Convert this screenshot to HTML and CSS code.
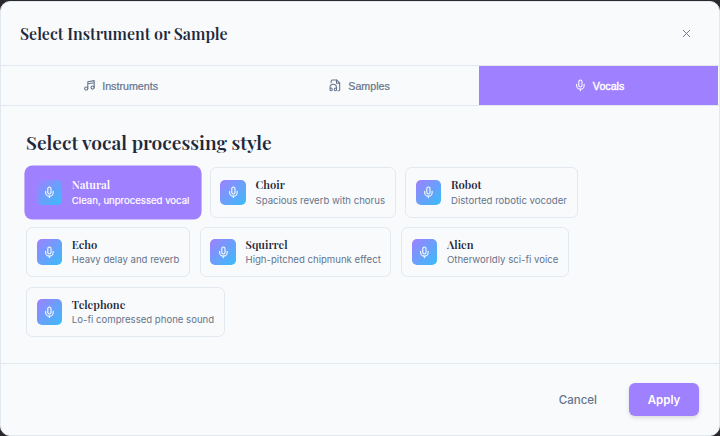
FILE: index.html
```html
<!DOCTYPE html>
<html lang="en">
<head>
<meta charset="utf-8">
<title>Select Instrument or Sample</title>
<link rel="stylesheet" href="styles.css">
</head>
<body>
<svg class="defs" aria-hidden="true">
  <symbol id="mic" viewBox="0 0 24 24"><path d="M12 2a3 3 0 0 0-3 3v7a3 3 0 0 0 6 0V5a3 3 0 0 0-3-3Z"/><path d="M19 10v2a7 7 0 0 1-14 0v-2M12 19v3"/></symbol>
  <symbol id="music" viewBox="0 0 24 24"><path d="M9 18V5l12-2v13M9 9l12-2"/><circle cx="6" cy="18" r="3"/><circle cx="18" cy="16" r="3"/></symbol>
  <symbol id="file-audio" viewBox="0 0 24 24"><path d="M4 7V4a2 2 0 0 1 2-2h8.500L20 7.500V20a2 2 0 0 1-2 2h-1"/><path d="M14 2v6h6"/><path d="M2 19a2 2 0 1 1 4 0v1a2 2 0 1 1-4 0v-4a6 6 0 0 1 12 0v4a2 2 0 1 1-4 0v-1a2 2 0 1 1 4 0"/></symbol>
  <symbol id="close" viewBox="0 0 24 24"><path d="M18 6 6 18M6 6l12 12"/></symbol>
</svg>
<div class="dialog" role="dialog">
  <header class="header">
    <h1 class="title">Select Instrument or Sample</h1>
    <button class="close" aria-label="Close"><svg class="icon"><use href="#close"/></svg></button>
  </header>
  <nav class="tabs">
    <button class="tab"><svg class="icon"><use href="#music"/></svg><span>Instruments</span></button>
    <button class="tab"><svg class="icon"><use href="#file-audio"/></svg><span>Samples</span></button>
    <button class="tab active"><svg class="icon"><use href="#mic"/></svg><span>Vocals</span></button>
  </nav>
  <main class="content">
    <h2 class="heading">Select vocal processing style</h2>
    <div class="cards">
      <div class="card selected"><span class="badge"><svg class="icon"><use href="#mic"/></svg></span><div><div class="name">Natural</div><div class="desc">Clean, unprocessed vocal</div></div></div>
      <div class="card"><span class="badge"><svg class="icon"><use href="#mic"/></svg></span><div><div class="name">Choir</div><div class="desc">Spacious reverb with chorus</div></div></div>
      <div class="card"><span class="badge"><svg class="icon"><use href="#mic"/></svg></span><div><div class="name">Robot</div><div class="desc">Distorted robotic vocoder</div></div></div>
      <div class="card"><span class="badge"><svg class="icon"><use href="#mic"/></svg></span><div><div class="name">Echo</div><div class="desc">Heavy delay and reverb</div></div></div>
      <div class="card"><span class="badge"><svg class="icon"><use href="#mic"/></svg></span><div><div class="name">Squirrel</div><div class="desc">High-pitched chipmunk effect</div></div></div>
      <div class="card"><span class="badge"><svg class="icon"><use href="#mic"/></svg></span><div><div class="name">Alien</div><div class="desc">Otherworldly sci-fi voice</div></div></div>
      <div class="card"><span class="badge"><svg class="icon"><use href="#mic"/></svg></span><div><div class="name">Telephone</div><div class="desc">Lo-fi compressed phone sound</div></div></div>
    </div>
  </main>
  <footer class="footer">
    <button class="cancel">Cancel</button>
    <button class="apply">Apply</button>
  </footer>
</div>
</body>
</html>
```
FILE: styles.css
```css
* { box-sizing: border-box; margin: 0; }
body {
  height: 436px;
  overflow: hidden;
  background: #2b292c;
  font-family: Inter, sans-serif;
  color: #1e293b;
}
button { border: 0; padding: 0; background: none; }
.defs { display: none; }
.icon {
  width: 12.8px;
  height: 12.8px;
  fill: none;
  stroke: currentColor;
  stroke-width: 2;
  stroke-linecap: round;
  stroke-linejoin: round;
}
.dialog {
  display: flex;
  flex-direction: column;
  height: 435px;
  margin-top: 1px;
  border: 1px solid #e2e8f0;
  border-radius: 10px;
  background: #f9fafc;
  overflow: hidden;
}
.header {
  display: flex;
  align-items: center;
  justify-content: space-between;
  height: 64px;
  padding: 0 26px 0 19px;
  border-bottom: 1px solid #e2e8f0;
}
.title, .heading, .name {
  font-family: "Playfair Display", "Liberation Serif", serif;
  white-space: nowrap;
}
.title { font-size: 16px; font-weight: 600; line-height: 22px; }
.close { display: flex; color: #64748b; }
.close .icon { width: 13px; height: 13px; stroke-width: 1.7; }
.tabs {
  display: grid;
  grid-template-columns: repeat(3, 1fr);
  height: 40px;
  padding-right: 1px;
  border-bottom: 1px solid #e2e8f0;
}
.tab {
  display: flex;
  align-items: center;
  justify-content: center;
  gap: 6.4px;
  font: 500 10.7px "Liberation Sans", Arial, sans-serif;
  color: #64748b;
  -webkit-text-stroke: 0.2px currentColor;
}
.tab.active { padding-left: 1px; background: #9f80ff; color: #fff; -webkit-text-stroke-width: 0.4px; }
.content { flex: 1; padding: 23px 25px 0; }
.heading { font-size: 19.2px; font-weight: 600; line-height: 26px; }
.cards {
  display: flex;
  flex-wrap: wrap;
  gap: 9.6px;
  width: 570px;
  margin-top: 12.38px;
}
.card {
  display: flex;
  align-items: center;
  gap: 9.6px;
  height: 50.2px;
  padding: 0 9.66px;
  border: 1px solid #e2e8f0;
  border-radius: 6.4px;
}
.badge {
  display: flex;
  align-items: center;
  justify-content: center;
  width: 25.6px;
  height: 25.6px;
  border-radius: 5px;
  background: linear-gradient(135deg, #9f80ff, #38bdf8);
  color: #fff;
}
.name { font-size: 11.2px; font-weight: 600; line-height: 15px; }
.desc { margin-top: 0.15px; font-size: 9.6px; line-height: 15px; color: #64748b; white-space: nowrap; }
.selected {
  background: #9f80ff;
  border-color: #9f80ff;
  color: #fff;
  box-shadow: 0 0 0 1.6px #9f80ff;
}
.selected .desc { color: #fff; -webkit-text-stroke: 0.2px #fff; }
.footer {
  display: flex;
  align-items: center;
  justify-content: flex-end;
  height: 72px;
  padding-right: 20px;
  border-top: 1px solid #e2e8f0;
}
.cancel, .apply { font: 500 11.5px Inter, sans-serif; }
.cancel { margin-right: 32px; color: #64748b; }
.apply {
  width: 70px;
  height: 33px;
  border-radius: 6px;
  background: #9f80ff;
  color: #fff;
  font-weight: 600;
  box-shadow: 0 2px 4px #0000001f;
}
```
